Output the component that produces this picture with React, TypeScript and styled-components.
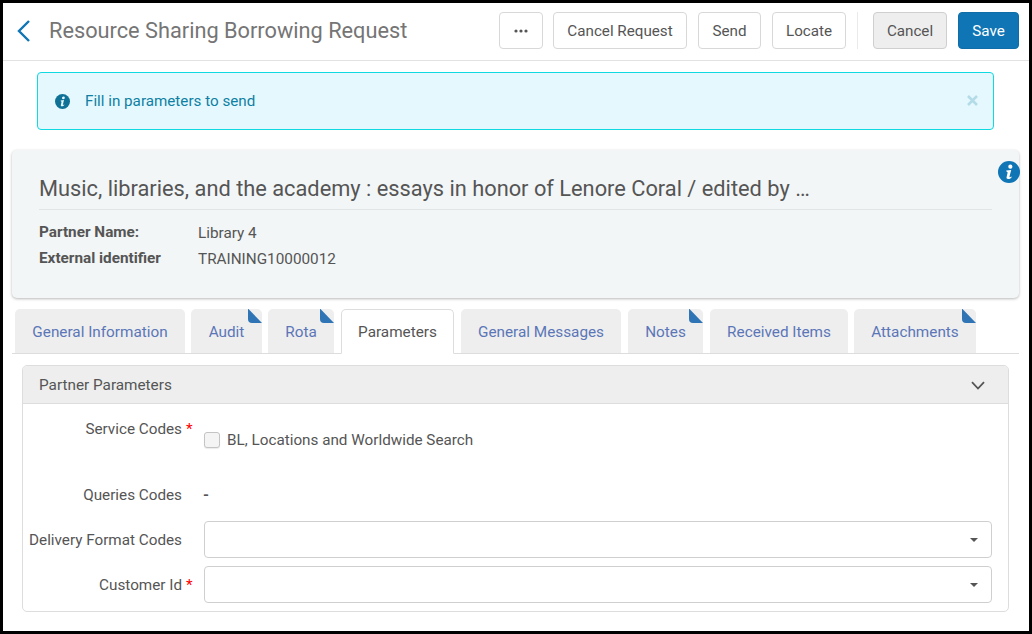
import React from 'react';
import styled, { createGlobalStyle } from 'styled-components';

const GlobalStyle = createGlobalStyle`
  html, body {
    margin: 0;
    padding: 0;
    background: #000;
  }
  body {
    font-family: Roboto, "Liberation Sans", sans-serif;
    color: #555;
  }
  * {
    box-sizing: border-box;
  }
`;

const Page = styled.div`
  width: 1026px;
  height: 628px;
  margin: 3px;
  background: #fff;
  overflow: hidden;
`;

const Header = styled.header`
  display: flex;
  align-items: center;
  height: 58px;
  padding: 0 10px 2px 13px;
  border-bottom: 1px solid #e2e2e2;
`;

const BackLink = styled.a`
  display: flex;
  width: 33px;
  color: #0f75b5;
`;

const PageTitle = styled.h1`
  flex: 1;
  margin: 0;
  font-size: 21.75px;
  font-weight: 400;
  color: #757575;
`;

const Actions = styled.div`
  display: flex;
  align-items: center;
`;

const Button = styled.button<{ $variant?: 'default' | 'muted' | 'primary'; $gap?: number; $width: number }>`
  width: ${(p) => p.$width}px;
  height: 37px;
  padding: 0;
  margin-left: ${(p) => p.$gap ?? 11}px;
  font-family: inherit;
  font-size: 15.2px;
  border-radius: 4px;
  border: 1px solid ${(p) => (p.$variant === 'primary' ? '#0f6ea8' : p.$variant === 'muted' ? '#cfcfcf' : '#d8d8d8')};
  background: ${(p) => (p.$variant === 'primary' ? '#0f75b5' : p.$variant === 'muted' ? '#eee' : '#fff')};
  color: ${(p) => (p.$variant === 'primary' ? '#fff' : '#555')};
`;

const MoreButton = styled(Button)`
  display: flex;
  align-items: center;
  justify-content: center;
`;

const ActionDivider = styled.span`
  width: 1px;
  height: 37px;
  margin: 0 15px 0 11px;
  background: #eaeaea;
`;

const Alert = styled.div`
  display: flex;
  align-items: center;
  height: 58px;
  margin: 11px 35px 0 34px;
  padding: 0 15px 0 17px;
  border: 1px solid #10d9e2;
  border-radius: 4px;
  background: #e4f8fe;
  color: #0f7fa3;
  font-size: 15.2px;
`;

const AlertText = styled.span`
  flex: 1;
  margin-left: 15px;
`;

const AlertClose = styled.span`
  display: flex;
  margin-bottom: 2px;
  color: #b4dbe8;
`;

const Card = styled.section`
  position: relative;
  height: 148px;
  margin: 20px 10px 0 9px;
  padding: 23px 27px 0;
  border-radius: 5px;
  background: #f3f6f7;
  box-shadow: 0 1px 3px rgba(0, 0, 0, 0.28);
`;

const CardInfo = styled.span`
  position: absolute;
  top: 11px;
  right: -1px;
  display: flex;
`;

const CardTitle = styled.h2`
  margin: 0;
  padding: 0 0 5px;
  font-size: 21.8px;
  line-height: 31px;
  font-weight: 400;
  color: #555;
  border-bottom: 1px solid #e2e5e6;
`;

const DetailGrid = styled.dl`
  display: grid;
  grid-template-columns: 159px 1fr;
  grid-auto-rows: 26px;
  align-items: center;
  margin: 10px 0 0;
  font-size: 15.3px;
`;

const DetailLabel = styled.dt`
  font-weight: 700;
  margin-bottom: 2px;
`;

const DetailValue = styled.dd`
  margin: 0;
`;

const TabBar = styled.nav`
  display: flex;
  height: 45px;
  margin: 11px 10px 0 9px;
  padding-left: 3px;
  border-bottom: 1px solid #ddd;
`;

const Tab = styled.a<{ $active?: boolean; $width: number; $gap: number }>`
  position: relative;
  display: flex;
  align-items: center;
  justify-content: center;
  width: ${(p) => p.$width}px;
  height: ${(p) => (p.$active ? 45 : 44)}px;
  margin-left: ${(p) => p.$gap}px;
  padding-top: ${(p) => (p.$active ? 0 : 2)}px;
  font-size: 15.3px;
  border-radius: 5px 5px 0 0;
  color: ${(p) => (p.$active ? '#555' : '#5b76b8')};
  background: ${(p) => (p.$active ? '#fff' : '#eee')};
  border: ${(p) => (p.$active ? '1px solid #ddd' : 'none')};
  border-bottom: ${(p) => (p.$active ? '1px solid #fff' : 'none')};
`;

const TabCorner = styled.svg`
  position: absolute;
  top: 0;
  right: 0;
`;

const Panel = styled.section`
  height: 247px;
  margin: 11px 20px 0 19px;
  border: 1px solid #ddd;
  border-radius: 5px;
  overflow: hidden;
`;

const PanelHeader = styled.div`
  display: flex;
  align-items: center;
  justify-content: space-between;
  height: 38px;
  padding: 0 23px 0 16px;
  background: #eee;
  border-bottom: 1px solid #ddd;
  font-size: 15.3px;
`;

const PanelChevron = styled.span`
  display: flex;
  margin-top: 2px;
  color: #555;
`;

const FormRow = styled.div<{ $height: number }>`
  display: grid;
  grid-template-columns: 159px 11px 1fr;
  height: ${(p) => p.$height}px;
  padding-right: 16px;
  font-size: 15.25px;
`;

const FieldLabel = styled.label<{ $top?: number }>`
  text-align: right;
  line-height: 18px;
  padding-top: ${(p) => p.$top ?? 0}px;
`;

const Required = styled.span<{ $top?: number }>`
  padding: ${(p) => p.$top ?? 0}px 0 0 4px;
  color: #f00;
  line-height: 18px;
`;

const FieldBody = styled.div<{ $top?: number }>`
  display: flex;
  align-items: center;
  gap: 7px;
  height: fit-content;
  margin-left: 11px;
  padding-top: ${(p) => p.$top ?? 0}px;
`;

const EmptyValue = styled.span`
  font-weight: 700;
  margin-left: -1px;
`;

const Checkbox = styled.span`
  width: 16px;
  height: 16px;
  border: 1px solid #c4c4c4;
  border-radius: 3px;
  background: #f4f4f4;
  box-shadow: 0 1px 1px rgba(0, 0, 0, 0.08);
`;

const Select = styled.div`
  display: flex;
  justify-content: flex-end;
  align-items: center;
  width: 100%;
  height: 37px;
  padding-right: 13px;
  border: 1px solid #cfcfcf;
  border-radius: 4px;
  background: #fff;
`;

const Caret = styled.span`
  width: 0;
  height: 0;
  border-left: 4px solid transparent;
  border-right: 4px solid transparent;
  border-top: 4px solid #555;
`;

const InfoIcon = ({ size, fill, glyph }: { size: number; fill: string; glyph: string }) => (
  <svg width={size} height={size} viewBox="0 0 22 22">
    <circle cx="11" cy="11" r="11" fill={fill} />
    <path
      fill={glyph}
      d="M12.3 3.6a2.1 2.1 0 1 1 .1 4.200 2.100 2.100 0 0 1-.1-4.200zM8.200 9.500l5-.6-1.700 6.700c-.1.500.1.700.5.600.4-.1.800-.4 1.200-.8l.6.500c-1 1.500-2.400 2.200-3.700 2.200-1.300 0-1.800-.8-1.500-2l1-4.400c.1-.6-.2-.8-.8-.8z"
    />
  </svg>
);

const Corner = () => (
  <TabCorner width="14" height="14" viewBox="0 0 14 14">
    <path fill="#2f75b5" d="M0 0h.5L14 14H4a4 4 0 0 1-4-4z" />
  </TabCorner>
);

const tabs = [
  { label: 'General Information', width: 170, gap: 0 },
  { label: 'Audit', width: 71, gap: 6, corner: true },
  { label: 'Rota', width: 66, gap: 6, corner: true },
  { label: 'Parameters', width: 113, gap: 7, active: true },
  { label: 'General Messages', width: 160, gap: 7 },
  { label: 'Notes', width: 75, gap: 7, corner: true },
  { label: 'Received Items', width: 138, gap: 7 },
  { label: 'Attachments', width: 122, gap: 6, corner: true },
];

export default function App() {
  return (
    <>
      <GlobalStyle />
      <Page>
        <Header>
          <BackLink>
            <svg width="16" height="22" viewBox="0 0 16 22" fill="none" stroke="currentColor" strokeWidth="2.4">
              <path d="M13 1 3 11l10 10" />
            </svg>
          </BackLink>
          <PageTitle>Resource Sharing Borrowing Request</PageTitle>
          <Actions>
            <MoreButton aria-label="More" $width={44}>
              <svg width="14" height="4" viewBox="0 0 14 4" fill="#555">
                <circle cx="2" cy="2" r="1.6" />
                <circle cx="7" cy="2" r="1.6" />
                <circle cx="12" cy="2" r="1.6" />
              </svg>
            </MoreButton>
            <Button $gap={10} $width={134}>
              Cancel Request
            </Button>
            <Button $width={63}>Send</Button>
            <Button $width={74}>Locate</Button>
            <ActionDivider />
            <Button $variant="muted" $gap={0} $width={74}>
              Cancel
            </Button>
            <Button $variant="primary" $width={61}>
              Save
            </Button>
          </Actions>
        </Header>

        <Alert>
          <InfoIcon size={15} fill="#0f7196" glyph="#e4f8fe" />
          <AlertText>Fill in parameters to send</AlertText>
          <AlertClose>
            <svg width="11" height="11" viewBox="0 0 11 11" stroke="currentColor" strokeWidth="2.6">
              <path d="M1 1l9 9M10 1l-9 9" />
            </svg>
          </AlertClose>
        </Alert>

        <Card>
          <CardInfo>
            <InfoIcon size={22} fill="#0f75b5" glyph="#fff" />
          </CardInfo>
          <CardTitle>Music, libraries, and the academy : essays in honor of Lenore Coral / edited by …</CardTitle>
          <DetailGrid>
            <DetailLabel>Partner Name:</DetailLabel>
            <DetailValue>Library 4</DetailValue>
            <DetailLabel>External identifier</DetailLabel>
            <DetailValue>TRAINING10000012</DetailValue>
          </DetailGrid>
        </Card>

        <TabBar>
          {tabs.map((tab) => (
            <Tab key={tab.label} $active={tab.active} $width={tab.width} $gap={tab.gap}>
              {tab.label}
              {tab.corner && <Corner />}
            </Tab>
          ))}
        </TabBar>

        <Panel>
          <PanelHeader>
            Partner Parameters
            <PanelChevron>
              <svg width="14" height="9" viewBox="0 0 14 9" fill="none" stroke="currentColor" strokeWidth="1.800">
                <path d="M1 1.200 7 7.500l6-6.300" />
              </svg>
            </PanelChevron>
          </PanelHeader>
          <FormRow $height={67}>
            <FieldLabel $top={16}>Service Codes</FieldLabel>
            <Required $top={16}>*</Required>
            <FieldBody $top={27}>
              <Checkbox />
              BL, Locations and Worldwide Search
            </FieldBody>
          </FormRow>
          <FormRow $height={50}>
            <FieldLabel $top={15}>Queries Codes</FieldLabel>
            <span />
            <FieldBody $top={15}>
              <EmptyValue>-</EmptyValue>
            </FieldBody>
          </FormRow>
          <FormRow $height={45}>
            <FieldLabel $top={10}>Delivery Format Codes</FieldLabel>
            <span />
            <FieldBody>
              <Select>
                <Caret />
              </Select>
            </FieldBody>
          </FormRow>
          <FormRow $height={45}>
            <FieldLabel $top={10}>Customer Id</FieldLabel>
            <Required $top={10}>*</Required>
            <FieldBody>
              <Select>
                <Caret />
              </Select>
            </FieldBody>
          </FormRow>
        </Panel>
      </Page>
    </>
  );
}
